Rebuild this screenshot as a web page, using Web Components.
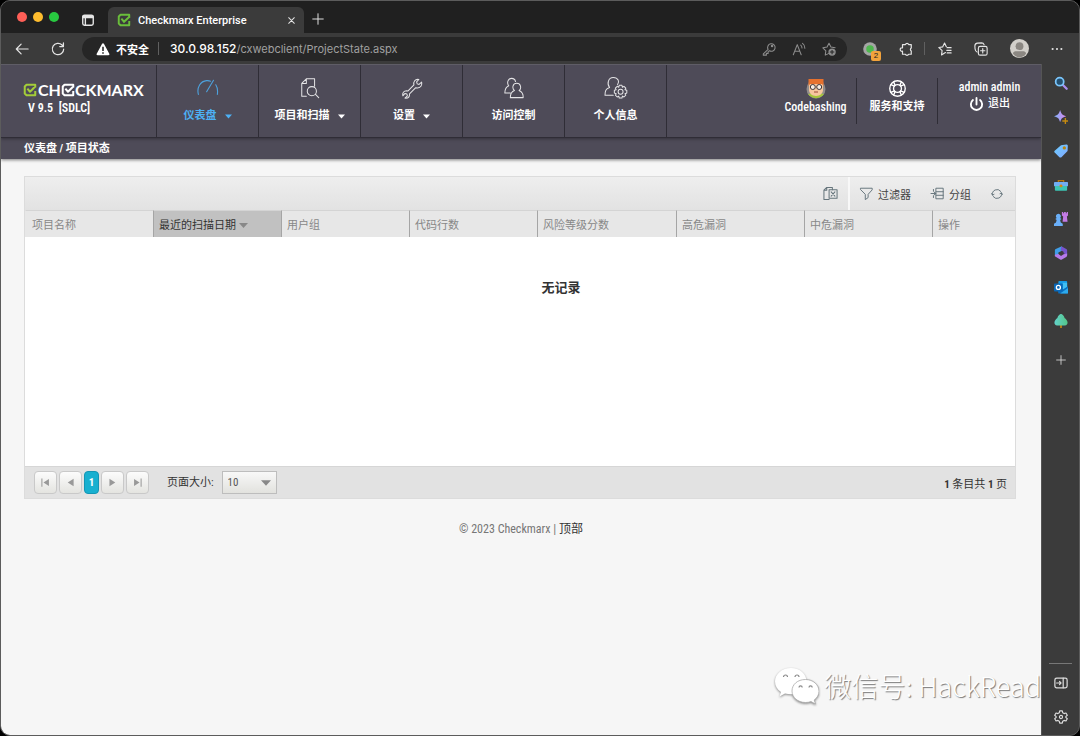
<!DOCTYPE html>
<html lang="zh-CN">
<head>
<meta charset="utf-8">
<title>Checkmarx Enterprise</title>
<style>
  html, body {
    margin: 0;
    padding: 0;
    background-color: #000;
  }

  body {
    font-family: "Roboto Condensed", "Liberation Sans Narrow", "Noto Sans CJK SC", sans-serif;
    font-size: 12px;
  }
</style>
</head>
<body>
<browser-window>
  <tab-strip slot="tabs">Checkmarx Enterprise</tab-strip>
  <address-bar slot="address" host="30.0.98.152" path="/cxwebclient/ProjectState.aspx">不安全</address-bar>
  <cx-header>
    <nav-item icon="gauge" active menu>仪表盘</nav-item>
    <nav-item icon="scan" menu>项目和扫描</nav-item>
    <nav-item icon="wrench" menu>设置</nav-item>
    <nav-item icon="users">访问控制</nav-item>
    <nav-item icon="profile">个人信息</nav-item>
    <span slot="crumbs">仪表盘 / 项目状态</span>
  </cx-header>
  <project-grid></project-grid>
  <cx-footer></cx-footer>
  <wechat-mark>微信号: HackRead</wechat-mark>
  <side-rail slot="rail"></side-rail>
</browser-window>

<script>
const line = 'fill="none" stroke="currentColor" stroke-linecap="round" stroke-linejoin="round"';

const icons = {
  // browser
  panel: `<g ${line} stroke-width="1.6"><rect x="2" y="2.500" width="12" height="11.500" rx="2"/><path d="M2 4h12M2 5.300h12M5 5v9"/></g>`,
  close: `<path ${line} stroke-width="1.800" d="M3 3l10 10M13 3L3 13"/>`,
  plus: `<path ${line} stroke-width="1.300" d="M8 1v14M1 8h14"/>`,
  back: `<path ${line} stroke-width="1.400" d="M15 8H1.500M7 2.500L1.500 8 7 13.500"/>`,
  reload: `<path ${line} stroke-width="1.400" d="M14.500 8A6.500 6.500 0 1 1 12.600 3.400L14 5M14.200 1v4.200H10"/>`,
  warning: `<path fill="currentColor" d="M8 1.500c.5 0 .9.300 1.200.800l6 11c.5.900 0 1.700-1 1.700H1.800c-1 0-1.500-.8-1-1.700l6-11c.3-.5.700-.8 1.200-.8z"/><path stroke="#262626" stroke-width="1.800" d="M8 5.500v4.800M8 11.600v1.700"/>`,
  key: `<g ${line} stroke-width="1.200"><path d="M7 8.500L1.500 13.500V15H5v-2h2v-2l1.500-1a4.300 4.300 0 1 0-1.500-1.500z"/><circle cx="11.500" cy="4.500" r=".8"/></g>`,
  read: `<g ${line} stroke-width="1.200"><path d="M1.500 14.500L6 3l4.500 11.500M3 10.500h6M10 3.500c1 .8 1.400 2 1.400 3.300M12 1.500c2 1.400 2.700 3.300 2.700 5.600"/></g>`,
  starAdd: `<path ${line} stroke-width="1.200" d="M8 13l-4.300 2 .7-4.900L1 6.600l4.800-.8L8 1.500l2.200 4.300 4.800.8"/><circle cx="11.500" cy="11.500" r="4.200" fill="currentColor"/><path stroke="#262626" stroke-width="1.200" d="M11.500 9v5M9 11.500h5"/>`,
  puzzle: `<path ${line} stroke-width="1.400" d="M5 3h2.300a2 2 0 0 1 3.800 0H14v3.800a2 2 0 0 0 0 3.400V14h-3a2 2 0 0 1-3.700 0H4v-3.500a2 2 0 1 1 0-3.800V3z"/>`,
  starList: `<path ${line} stroke-width="1.300" d="M8.500 12L4 14.800l.7-4.900L1 6.300l4.300-.7L7.500 1.200l2 4.200M10.500 6.500H15M10 9.500h5M10.500 12.500H15"/>`,
  collections: `<g ${line} stroke-width="1.300"><rect x="5" y="5" width="10" height="10" rx="2"/><path d="M10 7.500v5M7.500 10h5M3.500 11.500C1.800 11 1.500 9.500 1.200 7.800L1 4.500C1 2.500 2 1.500 4 1.300l4.500-.3c1.600 0 2.600.7 3 2"/></g>`,
  dots: `<g fill="currentColor"><circle cx="3" cy="8" r="1.200"/><circle cx="8" cy="8" r="1.200"/><circle cx="13" cy="8" r="1.200"/></g>`,
  avatar: `<circle cx="8" cy="8" r="8" fill="#d2cfca"/><circle cx="8" cy="6" r="3.300" fill="#8b8782"/><path fill="#8b8782" d="M2.500 12.500c0-1.700 1.500-2.200 3-2.200h5c1.500 0 3 .5 3 2.200A7.500 7.500 0 0 1 8 15.500a7.500 7.500 0 0 1-5.500-3z"/>`,
  extension: `<circle cx="8" cy="8" r="7.800" fill="#a5a5a5"/><circle cx="8" cy="8" r="4.300" fill="#4eb84e"/>`,
  favicon: `<path fill="none" stroke="#6abf3b" stroke-width="2.200" stroke-linejoin="round" d="M14 5V2H4L2 4v8l2 2h10V9"/><path fill="none" stroke="#6abf3b" stroke-width="2.200" d="M5 6.500l3 3.500 6.500-6"/>`,

  // side rail
  search: `<path stroke="#ab8df0" stroke-width="2.600" stroke-linecap="round" d="M10.500 10.500l4 4"/><circle cx="6.500" cy="6.500" r="4.600" fill="#245070" stroke="#7ac5fb" stroke-width="2"/>`,
  sparkle: `<path fill="url(#a)" d="M7 0c1.200 4.300 2.200 5.600 7 7-4.800 1.400-5.800 2.700-7 7-1.200-4.300-2.200-5.600-7-7 4.800-1.400 5.800-2.700 7-7z"/><path stroke="#c58a10" stroke-width="1.600" d="M13 9v7M9.500 12.500h6.500"/><linearGradient id="a"><stop stop-color="#7fb2fa"/><stop offset="1" stop-color="#d888ee"/></linearGradient>`,
  tag: `<path fill="url(#b)" d="M8 1.500l6-1c.9 0 1.700.6 1.800 1.500l-.3 6L8.500 15c-.7.700-1.600.7-2.300 0L.8 9.800c-.7-.7-.7-1.500 0-2.200z"/><circle cx="11.800" cy="4.500" r="1.900" fill="#b88410"/><linearGradient id="b" y2="1"><stop stop-color="#6bcfff"/><stop offset="1" stop-color="#82a7ff"/></linearGradient>`,
  toolbox: `<path fill="none" stroke="#b8780c" stroke-width="1.500" d="M5 5V3h6v2"/><rect y="4.500" width="16" height="5" rx="1" fill="#71aef3"/><path fill="#3dc5b4" d="M1 9h14v4.500c0 .6-.4 1-1 1H2c-.6 0-1-.4-1-1z"/><circle cx="8" cy="9" r="1.700" fill="#d18a14"/>`,
  games: `<path fill="#c37be6" d="M9 0h1.500v1.500h1V0h2v1.500h1V0H16v4l-1.300 1 .8 6H9.800L10.500 5 9 4z"/><path fill="#6aaff8" d="M5 2a2.800 2.800 0 0 1 2 4.800L8.500 8 7 9.200 7.700 12 10 13.500V16H0v-2.500L2.300 12 3 9.200 1.500 8 3 6.800A2.800 2.800 0 0 1 5 2z"/>`,
  office: `<path fill="#3f9ee8" d="M9 .2L2 3.500C1.200 4 1 4.500 1 5.300V11l4 1.500V7.500L9 5.300z"/><path fill="#7654cd" d="M8.500.2L14 3.300c.8.500 1 1 1 1.800v5.200l-4-2V6.700L7.500 4.800z"/><path fill="#b57aea" d="M15 8.500v2.300c0 .8-.3 1.300-1 1.700l-5 3c-.7.4-1.300.4-2 0L1 11.800V10l4-1 3 2.300 3-1.800z"/>`,
  outlook: `<rect x="5" y="1" width="10" height="10" rx="1" fill="#159be8"/><path fill="#40c0f4" d="M10 3h5v5l-5 3z"/><path fill="#0b6fc0" d="M4 7l6 4 6-4v7.500c0 .6-.4 1-1 1H5z"/><path fill="#2daaec" d="M7 15.500L16 9v5.500c0 .6-.4 1-1 1z"/><rect y="4" width="10" height="9" rx="1" fill="#0968b8"/><circle cx="5" cy="8.500" r="2.300" fill="none" stroke="#fff" stroke-width="1.500"/>`,
  tree: `<path fill="#c18412" d="M7 11h2v5H7z"/><path fill="url(#c)" d="M8 0c1.600 0 4 2.800 4 4.500 1.700.8 3.500 3.200 3.500 5.200 0 1.900-1 3.300-3 3.300h-9c-2 0-3-1.400-3-3.300 0-2 1.800-4.400 3.500-5.200C4 2.800 6.400 0 8 0z"/><linearGradient id="c"><stop stop-color="#63d2ca"/><stop offset="1" stop-color="#53c588"/></linearGradient>`,
  dock: `<g ${line} stroke-width="1.400"><rect x="1" y="2.500" width="14" height="11" rx="2"/><path d="M10.500 2.500v11M3 8h5M6.300 6.200L8 8 6.300 9.800"/></g>`,
  settings: `<g ${line} stroke-width="1.300"><circle cx="8" cy="8" r="1.800"/><path d="M6.500 1h3l.5 2.200 1.500.9 2.200-.7 1.500 2.600-1.700 1.500v1l1.700 1.500-1.500 2.600-2.200-.7-1.500.9-.5 2.200h-3L6 12.800l-1.500-.9-2.200.7L.8 10l1.700-1.500v-1L.8 6l1.500-2.600 2.200.7L6 3.200z"/></g>`,

  // application header
  gauge: `<path ${line} stroke-width="1.200" d="M1.500 19C-.5 11 4 4.500 10.500 4c1.800-.1 3 .1 4.300.6M10.500 16L18 3.500M20.500 8.500c1.900 3 2.300 6.500 1.700 10.500"/>`,
  scan: `<g ${line} stroke-width="1.100"><path d="M8 21H3V7l5-5h9v8M3 7h5V2"/><circle cx="14" cy="15.500" r="5"/><path d="M18 19l3.500 3.500"/></g>`,
  wrench: `<path ${line} stroke-width="1.100" d="M22.500 5.500c.8 3-.8 6.200-4.500 6.500l-2.200-.2-6.500 6.500c.3 3-1.300 5-4 5l-1-.3 2.700-2.500-.6-2-2-.6L2 20.500c-.8-3 1-5.500 4.200-5.500l1.500.2 6.400-6.500C13.200 5 15.300 2 19.500 2.700L17 5.300l.7 2.200 2 .6z"/>`,
  users: `<g ${line} stroke-width="1.100"><path d="M6 9.500C4 6 5.500 1.500 9.300 1.500c2.400 0 4 1.400 4.300 3.500M8 17.500H2c0-4.500.8-6.500 4.300-8M8 22.500h14c.2-4.500-1.500-6.500-4.500-7.700 3-2.300 2-8-2.500-8s-5.500 5.500-2.500 8C9.200 16 8 18 8 22.500z"/></g>`,
  profile: `<g ${line} stroke-width="1.100"><path d="M9 20H0c0-5 .8-7 5-8.500C1.800 7.500 3.500.5 9 .5s7.200 5 4.700 8"/><circle cx="17" cy="16" r="2.700"/><path d="M15.500 9h3l.5 2.200 1.700-1 2 2-.9 1.600 2 .7v3l-2 .7.9 1.600-2 2-1.700-1-.5 2.200h-3l-.5-2.200-1.700 1-2-2 .9-1.600-2-.7v-3l2-.7-.9-1.600 2-2 1.700 1z"/></g>`,
  caret: `<path fill="currentColor" d="M0 3.500h16L8 12.500z"/>`,
  ring: `<g ${line} stroke-width="1.300"><circle cx="8" cy="8" r="7.300"/><circle cx="8" cy="8" r="3.700"/><path d="M1.800 4.400l3.300 1.400M4.400 1.800l1.400 3.300M14.200 4.400l-3.300 1.400M11.600 1.800l-1.400 3.300M1.800 11.600l3.300-1.400M4.400 14.200l1.400-3.300M14.200 11.600l-3.300-1.400M11.600 14.200l-1.400-3.300"/></g>`,
  power: `<path ${line} stroke-width="2" d="M8 1v7M4.200 3.200a6 6 0 1 0 7.600 0"/>`,
  geek: `<circle cx="10" cy="11" r="9.500" fill="#918d8c"/><path fill="#a4c63a" d="M2 16c4-1.500 12-1.500 16 0-3.500 5.500-12.500 5.500-16 0z"/><path fill="#f6c79e" d="M3 5h14v7c0 3-3 6-7 6s-7-3-7-6z"/><path fill="#e6712e" d="M2.500 1h15v7L16 6H4L2.500 8z"/><g fill="#f8eee4" stroke="#3b3338"><circle cx="6.800" cy="9" r="2.500"/><circle cx="13.200" cy="9" r="2.500"/></g><path stroke="#9c4837" d="M8 14h4"/>`,

  // grid
  excel: `<g ${line} stroke-width="1.100"><path d="M6.500 14.500H1V4.500l3-3h6V4M1 4.500h3v-3"/><rect x="6.500" y="4" width="8.500" height="9"/><path d="M8.700 6.200l4 4.600M12.700 6.200l-4 4.600"/></g>`,
  funnel: `<path ${line} stroke-width="1.200" d="M1 1.500h14v2L10 9v4l-3.500 2.500V9L1 3.500z"/>`,
  group: `<g ${line} stroke-width="1.200"><path d="M6.500 1.500H15v13H6.500zM6.500 5.800H15M6.500 10.200H15M0 8h6M3.500 6L6 8l-2.500 2M3 3v2M3 11v2"/></g>`,
  refresh: `<path ${line} stroke-width="1.300" d="M2 9.500a6.200 6.200 0 0 1 11-5M14 6.500a6.200 6.200 0 0 1-11 5M.8 7.500L2 9.500l2-1M15.200 8.500L14 6.500l-2 1"/>`,
  first: `<path fill="#999" d="M2 2h1.500v12H2zM13 3v10L5 8z"/>`,
  prev: `<path fill="#999" d="M12.500 2.500v11L4 8z"/>`,
  next: `<path fill="#999" d="M3.500 2.500v11L12 8z"/>`,
  last: `<path fill="#999" d="M12.500 2H14v12h-1.500zM3 3v10l8-5z"/>`,
};

const bigIcons = ['gauge', 'scan', 'wrench', 'users', 'profile'];

class UiIcon extends HTMLElement {
  constructor() {
    super();
    this.shadowDOM = this.attachShadow({ mode: 'open' });
  }

  connectedCallback() {
    this.render();
  }

  render() {
    const name = this.getAttribute('name');
    let box = 16;
    if (bigIcons.includes(name)) box = 24;
    if (name === 'geek') box = 20;
    this.shadowDOM.innerHTML = `
      <style>
        :host {
          display: inline-block;
          flex: none;
          width: var(--size, 14px);
          height: var(--size, 14px);
        }

        svg {
          display: block;
          width: 100%;
          height: 100%;
          overflow: visible;
        }
      </style>
      <svg viewBox="0 0 ${box} ${box}" aria-hidden="true">${icons[name]}</svg>`;
  }
}

class BrowserWindow extends HTMLElement {
  constructor() {
    super();
    this.shadowDOM = this.attachShadow({ mode: 'open' });
  }

  connectedCallback() {
    this.render();
  }

  render() {
    this.shadowDOM.innerHTML = `
      <style>
        :host {
          display: flex;
          flex-direction: column;
          box-sizing: border-box;
          min-height: 100vh;
          overflow: hidden;
          border: 1px solid #5c5c5c;
          border-radius: 10px;
          background-color: #3b3b3b;
        }

        .body {
          display: flex;
          flex: 1;
        }

        main {
          position: relative;
          flex: 1;
          min-width: 0;
          overflow: hidden;
          background-color: #f6f6f6;
          border-top: 1px solid #5f5d66;
        }
      </style>
      <slot name="tabs"></slot>
      <slot name="address"></slot>
      <div class="body">
        <main><slot></slot></main>
        <slot name="rail"></slot>
      </div>`;
  }
}

class TabStrip extends HTMLElement {
  constructor() {
    super();
    this.shadowDOM = this.attachShadow({ mode: 'open' });
  }

  connectedCallback() {
    this.render();
  }

  render() {
    this.shadowDOM.innerHTML = `
      <style>
        :host {
          display: flex;
          align-items: flex-end;
          height: 32px;
          background-color: #202020;
          color: #fff;
          font: 500 11px Roboto, sans-serif;
        }

        button {
          display: flex;
          padding: 0;
          border: 0;
          background: none;
          color: #e4e4e4;
        }

        .lights {
          display: flex;
          gap: 6px;
          padding: 0 22px 11px 16px;
        }

        .lights button {
          width: 10px;
          height: 10px;
          border-radius: 50%;
        }

        .red { background-color: #ff5f57; }
        .yellow { background-color: #febc2e; }
        .green { background-color: #28c840; }

        .panel {
          --size: 14px;
          padding: 0 13px 6px 0;
        }

        .tab {
          display: flex;
          align-items: center;
          box-sizing: border-box;
          width: 196px;
          height: 26px;
          padding: 0 8px 0 9px;
          border-radius: 6px 6px 0 0;
          background-color: #3b3b3b;
        }

        .tab span {
          flex: 1;
          padding-left: 7px;
        }

        .tab button {
          --size: 9px;
        }

        .new {
          --size: 12px;
          padding: 0 0 8px 8px;
        }
      </style>
      <div class="lights">
        <button class="red" aria-label="关闭"></button>
        <button class="yellow" aria-label="最小化"></button>
        <button class="green" aria-label="全屏"></button>
      </div>
      <button class="panel" aria-label="标签页"><ui-icon name="panel"></ui-icon></button>
      <div class="tab">
        <ui-icon name="favicon"></ui-icon>
        <span><slot></slot></span>
        <button aria-label="关闭标签页"><ui-icon name="close"></ui-icon></button>
      </div>
      <button class="new" aria-label="新建标签页"><ui-icon name="plus"></ui-icon></button>`;
  }
}

class AddressBar extends HTMLElement {
  constructor() {
    super();
    this.shadowDOM = this.attachShadow({ mode: 'open' });
  }

  connectedCallback() {
    this.render();
  }

  render() {
    this.shadowDOM.innerHTML = `
      <style>
        :host {
          display: flex;
          align-items: center;
          height: 31px;
          padding-right: 4px;
          color: #e4e4e4;
          font: 500 11px Inter, "Noto Sans CJK SC", sans-serif;
        }

        button {
          position: relative;
          display: flex;
          align-items: center;
          justify-content: center;
          width: 36px;
          height: 28px;
          padding: 0;
          border: 0;
          background: none;
          color: inherit;
        }

        .back {
          margin-left: 3px;
        }

        .pill {
          display: flex;
          align-items: center;
          flex: 1;
          box-sizing: border-box;
          height: 24px;
          margin: 0 5px 0 6px;
          padding: 0 3px 0 14px;
          border-radius: 12px;
          background-color: #262626;
          color: #fff;
        }

        .state {
          padding: 0 9px 0 6px;
          font-weight: 700;
        }

        .bar {
          width: 1px;
          height: 13px;
          margin-right: 2px;
          background-color: #606060;
        }

        .pill .bar {
          margin-right: 11px;
        }

        label {
          font-size: 12px;
        }

        input {
          flex: 1;
          min-width: 0;
          padding: 0;
          border: 0;
          outline: 0;
          background: none;
          color: #a0a0a0;
          font: 400 11px Inter, sans-serif;
        }

        .pill button {
          width: 30px;
          color: #8d8d8d;
        }

        .badge {
          position: absolute;
          right: 7px;
          bottom: 2px;
          width: 10px;
          border-radius: 2px;
          background-color: #f2a33c;
          color: #222;
          font-size: 8px;
          line-height: 10px;
        }

        .avatar {
          --size: 19px;
          width: 40px;
        }
      </style>
      <button class="back" aria-label="后退"><ui-icon name="back"></ui-icon></button>
      <button aria-label="刷新"><ui-icon name="reload"></ui-icon></button>
      <div class="pill">
        <ui-icon name="warning"></ui-icon>
        <span class="state"><slot></slot></span>
        <span class="bar"></span>
        <label for="url">${this.getAttribute('host')}</label>
        <input id="url" value="${this.getAttribute('path')}">
        <button aria-label="密码"><ui-icon name="key"></ui-icon></button>
        <button aria-label="朗读"><ui-icon name="read"></ui-icon></button>
        <button aria-label="收藏"><ui-icon name="starAdd"></ui-icon></button>
      </div>
      <button aria-label="扩展"><ui-icon name="extension"></ui-icon><span class="badge">2</span></button>
      <button aria-label="扩展管理"><ui-icon name="puzzle"></ui-icon></button>
      <span class="bar"></span>
      <button aria-label="收藏夹"><ui-icon name="starList"></ui-icon></button>
      <button aria-label="集锦"><ui-icon name="collections"></ui-icon></button>
      <button class="avatar" aria-label="个人资料"><ui-icon name="avatar"></ui-icon></button>
      <button aria-label="更多"><ui-icon name="dots"></ui-icon></button>`;
  }
}

class SideRail extends HTMLElement {
  constructor() {
    super();
    this.shadowDOM = this.attachShadow({ mode: 'open' });
  }

  connectedCallback() {
    this.render();
  }

  render() {
    const apps = [
      ['search', '搜索'], ['sparkle', '发现'], ['tag', '购物'], ['toolbox', '工具'],
      ['games', '游戏'], ['office', 'Microsoft 365'], ['outlook', 'Outlook'], ['tree', '植树'],
    ];
    this.shadowDOM.innerHTML = `
      <style>
        :host {
          display: flex;
          flex-direction: column;
          align-items: center;
          box-sizing: border-box;
          width: 38px;
          padding: 2px 0 1px;
          border-left: 1px solid #555;
          color: #dcdcdc;
        }

        button {
          display: flex;
          align-items: center;
          justify-content: center;
          width: 36px;
          height: 34px;
          padding: 0;
          border: 0;
          background: none;
          color: inherit;
        }

        .add {
          --size: 10px;
          margin-top: 5px;
        }

        hr {
          width: 23px;
          margin: auto 0 2px;
          border: 0;
          border-top: 1px solid #777;
        }
      </style>
      ${apps.map(([icon, label]) => `<button aria-label="${label}"><ui-icon name="${icon}"></ui-icon></button>`).join('')}
      <button class="add" aria-label="添加"><ui-icon name="plus"></ui-icon></button>
      <hr>
      <button aria-label="隐藏边栏"><ui-icon name="dock"></ui-icon></button>
      <button aria-label="设置"><ui-icon name="settings"></ui-icon></button>`;
  }
}

class CxLogo extends HTMLElement {
  constructor() {
    super();
    this.shadowDOM = this.attachShadow({ mode: 'open' });
  }

  connectedCallback() {
    this.render();
  }

  render() {
    const mark = '<path d="M14 5V2H4L2 4v8l2 2h10V9M5 6.500l3 3.500 6-6"/>';
    this.shadowDOM.innerHTML = `
      <style>
        :host {
          display: block;
          box-sizing: border-box;
          width: 155px;
          padding: 15px 0 0 22px;
          color: #fff;
        }

        .name {
          display: flex;
          align-items: center;
          height: 19px;
          font: 700 16px Lato, sans-serif;
        }

        svg {
          width: 14px;
          height: 14px;
          fill: none;
          stroke: #fff;
          stroke-width: 2.300;
          stroke-linejoin: round;
        }

        .green {
          stroke: #a4cd39;
          margin-right: 1px;
        }

        .version {
          padding-left: 5px;
          line-height: 18px;
          font-weight: 600;
          white-space: pre;
        }
      </style>
      <div class="name">
        <svg class="green" viewBox="0 0 16 16">${mark}</svg>CH<svg viewBox="0 0 16 16">${mark}</svg>CKMARX
      </div>
      <div class="version">V 9.5  [SDLC]</div>`;
  }
}

class NavItem extends HTMLElement {
  constructor() {
    super();
    this.shadowDOM = this.attachShadow({ mode: 'open' });
  }

  connectedCallback() {
    this.render();
  }

  render() {
    const caret = this.hasAttribute('menu') ? '<ui-icon class="caret" name="caret"></ui-icon>' : '';
    this.shadowDOM.innerHTML = `
      <style>
        :host {
          display: block;
          box-sizing: border-box;
          width: 102px;
          border-left: 1px solid #2f2d36;
          color: #fff;
        }

        :host([active]) {
          color: #4db1f5;
        }

        a {
          display: flex;
          flex-direction: column;
          align-items: center;
          gap: 8px;
          padding-top: 12px;
          color: inherit;
          font-size: 11px;
          font-weight: 700;
          line-height: 18px;
          text-decoration: none;
        }

        .icon {
          --size: 22px;
          opacity: .85;
        }

        .label {
          display: flex;
          align-items: center;
          gap: 8px;
        }

        .caret {
          --size: 7px;
        }
      </style>
      <a href="#">
        <ui-icon class="icon" name="${this.getAttribute('icon')}"></ui-icon>
        <span class="label"><slot></slot>${caret}</span>
      </a>`;
  }
}

class CxHeader extends HTMLElement {
  constructor() {
    super();
    this.shadowDOM = this.attachShadow({ mode: 'open' });
  }

  connectedCallback() {
    this.render();
  }

  render() {
    this.shadowDOM.innerHTML = `
      <style>
        :host {
          display: block;
          background-color: #4e4b58;
          color: #fff;
          box-shadow: 0 1px 3px rgba(0, 0, 0, .5);
        }

        .top {
          display: flex;
          height: 72px;
          border-bottom: 1px solid #2f2d36;
          box-shadow: 0 1px 3px rgba(0, 0, 0, .35);
        }

        nav {
          display: flex;
          flex: 1;
        }

        .end {
          border-left: 1px solid #2f2d36;
        }

        .tools {
          display: flex;
          align-items: center;
          font-weight: 500;
          line-height: 16px;
        }

        .tool {
          display: flex;
          flex-direction: column;
          align-items: center;
          gap: 1px;
          box-sizing: border-box;
          width: 81px;
          height: 46px;
          color: inherit;
          text-decoration: none;
          --size: 20px;
        }

        .tool + .tool {
          border-left: 1px solid #2f2d36;
        }

        .help {
          --size: 17px;
          gap: 2px;
          padding-top: 2px;
          font-size: 11px;
          font-weight: 700;
        }

        .user {
          width: 104px;
          padding-top: 1px;
        }

        .user a {
          display: flex;
          align-items: center;
          gap: 4px;
          color: inherit;
          font-size: 11px;
          text-decoration: none;
          --size: 15px;
        }

        .crumbs {
          padding: 1px 0 0 23px;
          font-size: 11px;
          font-weight: 700;
          line-height: 20px;
        }
      </style>
      <div class="top">
        <cx-logo></cx-logo>
        <nav><slot></slot><span class="end"></span></nav>
        <div class="tools">
          <a class="tool" href="#"><ui-icon name="geek"></ui-icon>Codebashing</a>
          <a class="tool help" href="#"><ui-icon name="ring"></ui-icon>服务和支持</a>
          <div class="tool user">
            <span>admin admin</span>
            <a href="#"><ui-icon name="power"></ui-icon>退出</a>
          </div>
        </div>
      </div>
      <div class="crumbs"><slot name="crumbs"></slot></div>`;
  }
}

class ProjectGrid extends HTMLElement {
  constructor() {
    super();
    this.shadowDOM = this.attachShadow({ mode: 'open' });
  }

  connectedCallback() {
    this.render();
  }

  render() {
    const columns = [
      ['项目名称', 128], ['最近的扫描日期', 128], ['用户组', 128], ['代码行数', 128],
      ['风险等级分数', 139], ['高危漏洞', 128], ['中危漏洞', 128], ['操作', 83],
    ];
    this.shadowDOM.innerHTML = `
      <style>
        :host {
          display: block;
          margin: 17px 25px 0 23px;
          border: 1px solid #dcdcdc;
          background-color: #fff;
          color: #444;
          font-size: 11px;
        }

        .toolbar {
          display: flex;
          align-items: center;
          justify-content: flex-end;
          height: 33px;
          background: linear-gradient(#eee, #e2e2e2);
        }

        .toolbar button {
          display: flex;
          align-items: center;
          gap: 5px;
          padding: 0 10px;
          border: 0;
          background: none;
          color: #444;
          font: inherit;
          --size: 13px;
        }

        .toolbar ui-icon {
          color: #66757c;
        }

        .toolbar .export {
          --size: 15px;
          height: 33px;
          border-right: 2px solid #f8f8f8;
        }

        .toolbar .reload {
          --size: 12px;
          padding-right: 12px;
        }

        table {
          width: 100%;
          table-layout: fixed;
          border-collapse: separate;
          border-spacing: 0;
        }

        th {
          height: 27px;
          padding: 0 0 0 5px;
          border-top: 1px solid #d4d4d4;
          border-left: 1px solid #a5a5a5;
          box-sizing: border-box;
          background-color: #e7e7e7;
          color: #888;
          font-weight: 400;
          text-align: left;
          white-space: nowrap;
        }

        th:first-child {
          padding-left: 6px;
          border-left-color: #e7e7e7;
        }

        th.sorted {
          background-color: #c1c1c1;
          color: #333;
          --size: 9px;
        }

        .sorted ui-icon {
          margin-left: 3px;
          color: #888;
          vertical-align: -1px;
        }

        td {
          height: 229px;
          box-sizing: border-box;
          padding: 40px 0 0 82px;
          color: #333;
          font-size: 13px;
          font-weight: 700;
          text-align: center;
          vertical-align: top;
        }
      </style>
      <div class="toolbar">
        <button class="export" aria-label="导出"><ui-icon name="excel"></ui-icon></button>
        <button><ui-icon name="funnel"></ui-icon>过滤器</button>
        <button><ui-icon name="group"></ui-icon>分组</button>
        <button class="reload" aria-label="刷新"><ui-icon name="refresh"></ui-icon></button>
      </div>
      <table>
        <colgroup>${columns.map(([, width]) => `<col style="width: ${width}px">`).join('')}</colgroup>
        <thead>
          <tr>${columns.map(([title], i) => (i === 1
            ? `<th class="sorted" aria-sort="descending">${title}<ui-icon name="caret"></ui-icon></th>`
            : `<th>${title}</th>`)).join('')}</tr>
        </thead>
        <tbody>
          <tr><td colspan="8">无记录</td></tr>
        </tbody>
      </table>
      <grid-pager></grid-pager>`;
  }
}

class GridPager extends HTMLElement {
  constructor() {
    super();
    this.shadowDOM = this.attachShadow({ mode: 'open' });
  }

  connectedCallback() {
    this.render();
  }

  render() {
    this.shadowDOM.innerHTML = `
      <style>
        :host {
          display: flex;
          align-items: center;
          height: 31px;
          padding: 0 8px 0 9px;
          border-top: 1px solid #d6d6d6;
          background-color: #e2e2e2;
          color: #333;
        }

        .pages {
          display: flex;
          gap: 2px;
        }

        button {
          display: flex;
          align-items: center;
          justify-content: center;
          box-sizing: border-box;
          width: 23px;
          height: 23px;
          padding: 0;
          border: 1px solid #c9c9c9;
          border-radius: 4px;
          background: linear-gradient(#fcfcfc, #e4e4e0);
          font: inherit;
          --size: 11px;
        }

        .current {
          width: 15px;
          border-color: #1496b4;
          background: #18b0d0;
          color: #fff;
          font-weight: 700;
        }

        label {
          padding: 0 8px 3px 18px;
        }

        .size {
          display: grid;
          align-items: center;
          --size: 10px;
        }

        .size > * {
          grid-area: 1 / 1;
        }

        .size ui-icon {
          justify-self: end;
          margin-right: 6px;
          color: #888;
          pointer-events: none;
        }

        select {
          appearance: none;
          box-sizing: border-box;
          width: 55px;
          height: 23px;
          padding: 0 5px;
          border: 1px solid #bdbdbd;
          border-radius: 0;
          background: linear-gradient(#f8f8f8, #e2e2de);
          color: #555;
          font: inherit;
        }

        .total {
          margin-left: auto;
        }
      </style>
      <div class="pages">
        <button aria-label="首页"><ui-icon name="first"></ui-icon></button>
        <button aria-label="上一页"><ui-icon name="prev"></ui-icon></button>
        <button class="current">1</button>
        <button aria-label="下一页"><ui-icon name="next"></ui-icon></button>
        <button aria-label="末页"><ui-icon name="last"></ui-icon></button>
      </div>
      <label for="size">页面大小:</label>
      <span class="size">
        <select id="size"><option>10</option><option>20</option><option>50</option></select>
        <ui-icon name="caret"></ui-icon>
      </span>
      <span class="total"><b>1</b> 条目共 <b>1</b> 页</span>`;
  }
}

class CxFooter extends HTMLElement {
  constructor() {
    super();
    this.shadowDOM = this.attachShadow({ mode: 'open' });
  }

  connectedCallback() {
    this.render();
  }

  render() {
    this.shadowDOM.innerHTML = `
      <style>
        :host {
          display: block;
          padding: 21px 0;
          color: #777;
          line-height: 18px;
          text-align: center;
        }

        a {
          color: #333;
          text-decoration: none;
        }
      </style>
      © 2023 Checkmarx | <a href="#">顶部</a>`;
  }
}

class WechatMark extends HTMLElement {
  constructor() {
    super();
    this.shadowDOM = this.attachShadow({ mode: 'open' });
  }

  connectedCallback() {
    this.render();
  }

  render() {
    this.shadowDOM.innerHTML = `
      <style>
        :host {
          position: absolute;
          right: 0;
          bottom: 29px;
          display: flex;
          align-items: center;
          gap: 6px;
          color: #fff;
          font: 300 27px/40px "Noto Sans CJK SC", sans-serif;
          text-shadow: 1px 1px 1px #777;
          white-space: nowrap;
        }

        svg {
          width: 44px;
          height: 38px;
          filter: drop-shadow(0 1px 1px #888);
        }
      </style>
      <svg viewBox="0 0 44 38" fill="#fff" aria-hidden="true">
        <path d="M16 1C7 1 0 7 0 14.500c0 4.500 2.300 8 6 10.500l-1.500 4.500 5.500-3c2 .6 4 .8 6 .8 9 0 15.500-5.500 15.500-12.800S25 1 16 1z"/>
        <path stroke="#aaa" stroke-width=".8" d="M30.500 12.500C22.500 12.500 17 17.500 17 24s6 11.500 13.500 11.500c2 0 3.800-.3 5.500-.9l4.500 2.400-1.300-4c3-2.200 4.800-5.300 4.800-8.700 0-6.500-5.800-11.800-13.500-11.800z"/>
        <g fill="none" stroke="#888" stroke-width="1.200"><path d="M8.500 10a2 2 0 0 1 4 0M20 10a2 2 0 0 1 4 0M24 20.500a1.600 1.600 0 0 1 3.200 0M34 20.500a1.600 1.600 0 0 1 3.200 0"/></g>
      </svg>
      <slot></slot>`;
  }
}

customElements.define('ui-icon', UiIcon);
customElements.define('browser-window', BrowserWindow);
customElements.define('tab-strip', TabStrip);
customElements.define('address-bar', AddressBar);
customElements.define('side-rail', SideRail);
customElements.define('cx-logo', CxLogo);
customElements.define('nav-item', NavItem);
customElements.define('cx-header', CxHeader);
customElements.define('grid-pager', GridPager);
customElements.define('project-grid', ProjectGrid);
customElements.define('cx-footer', CxFooter);
customElements.define('wechat-mark', WechatMark);
</script>
</body>
</html>
